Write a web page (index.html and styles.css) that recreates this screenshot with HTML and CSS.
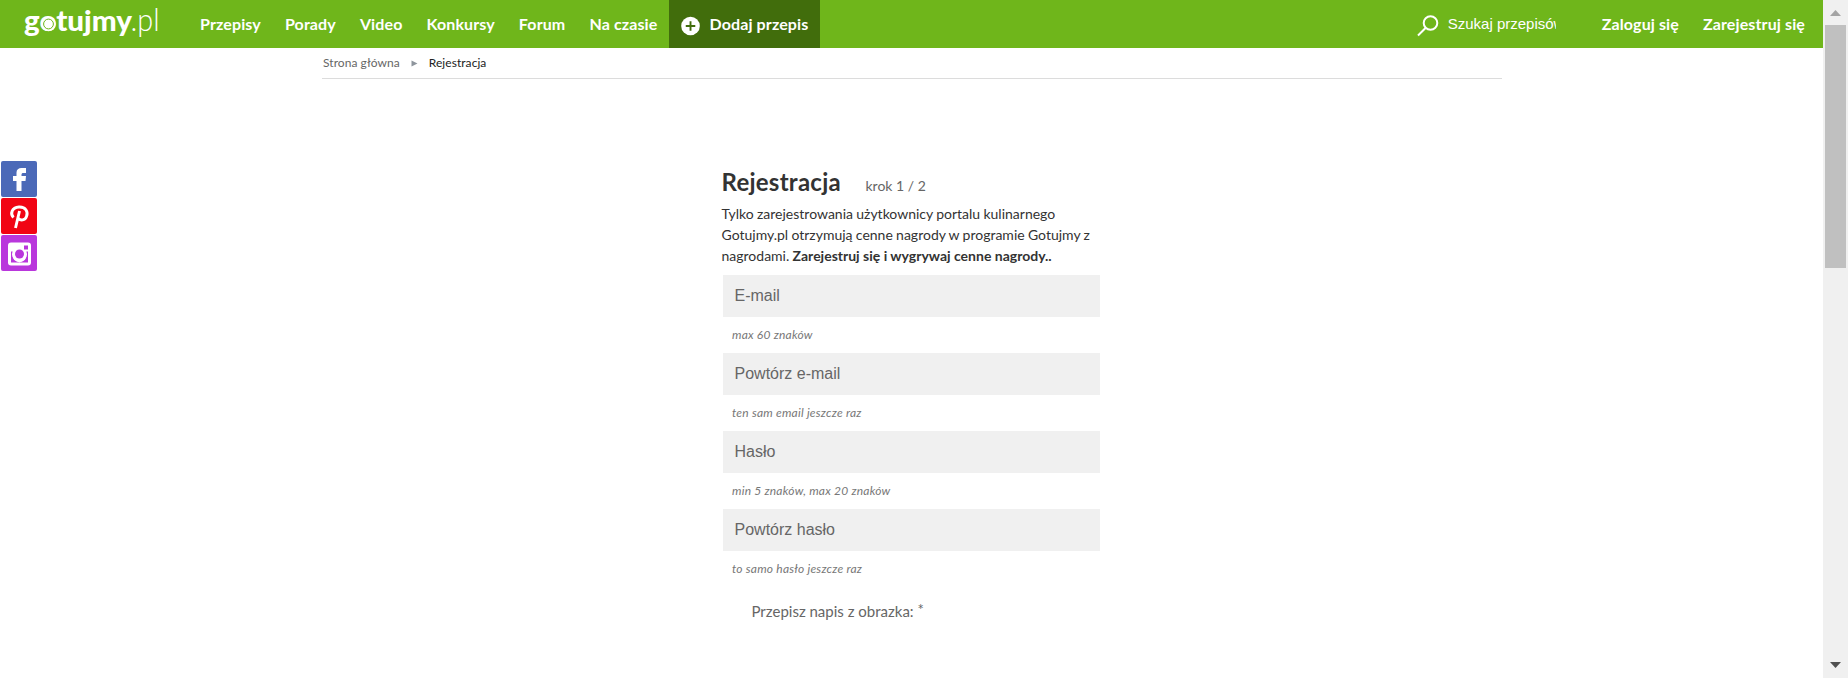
FILE: index.html
```html
<!DOCTYPE html>
<html lang="pl">
<head>
<meta charset="utf-8">
<title>Rejestracja - Gotujmy.pl</title>
<link rel="stylesheet" href="styles.css">
</head>
<body>
<div class="page">
  <header class="topbar">
    <a class="logo"><svg width="144" height="48" viewBox="0 0 144 48" role="img" aria-label="gotujmy.pl">
      <text class="logo-bold" x="7" y="31" textLength="108" lengthAdjust="spacingAndGlyphs">gotujmy</text>
      <circle class="logo-disc" cx="31.5" cy="24" r="7.3"/>
      <circle class="logo-ring" cx="31.5" cy="24" r="4.9"/>
      <text class="logo-light" x="113.500" y="31" textLength="29" lengthAdjust="spacingAndGlyphs">.pl</text>
    </svg></a>
    <nav class="menu">
      <a>Przepisy</a><a>Porady</a><a>Video</a><a>Konkursy</a><a>Forum</a><a>Na czasie</a>
      <a class="add"><svg width="20" height="20" viewBox="0 0 20 20"><circle cx="10" cy="10" r="9.8" fill="#fff"/><path d="M10 5v10M5 10h10" stroke="#416d0c" stroke-width="2"/></svg><span>Dodaj przepis</span></a>
    </nav>
    <div class="tools">
      <svg class="lens" width="22" height="22" viewBox="0 0 22 22"><circle cx="13.500" cy="8" r="6.800"/><path d="M8.800 12.800L1 20.500" /></svg>
      <span class="query">Szukaj przepisów</span>
      <a class="login">Zaloguj się</a><a class="register">Zarejestruj się</a>
    </div>
  </header>
  <div class="crumbs"><a>Strona główna</a><svg width="7" height="7" viewBox="0 0 7 7"><path d="M.5 .5L6.500 3.500L.5 6.500z" fill="#8e959d"/></svg><span>Rejestracja</span></div>
  <main class="form">
    <div class="heading"><h1>Rejestracja</h1><span>krok 1 / 2</span></div>
    <p class="intro">Tylko zarejestrowania użytkownicy portalu kulinarnego Gotujmy.pl otrzymują cenne nagrody w programie Gotujmy z nagrodami. <b>Zarejestruj się i wygrywaj cenne nagrody..</b></p>
    <div class="field"><div class="input">E-mail</div><em>max 60 znaków</em></div>
    <div class="field"><div class="input">Powtórz e-mail</div><em>ten sam email jeszcze raz</em></div>
    <div class="field"><div class="input">Hasło</div><em>min 5 znaków, max 20 znaków</em></div>
    <div class="field"><div class="input">Powtórz hasło</div><em>to samo hasło jeszcze raz</em></div>
    <div class="captcha">Przepisz napis z obrazka: <span>*</span></div>
  </main>
  <aside class="social">
    <a class="fb"><svg width="36" height="36" viewBox="0 0 36 36"><path d="M15.500 30V20H12v-5h3.500v-3.500C15.500 8.500 17.500 7 20.500 7H25v5h-2.500c-1.500 0-2 .5-2 2v1H25l-.5 5h-4v10z" fill="#fff"/></svg></a>
    <a class="pin"><svg width="36" height="36" viewBox="0 0 36 36"><path d="M12.500 19.500C9 16 10.500 9.500 18 9c7-.3 9.300 5 7.500 9.500-1.500 4-6 4.500-8 2M18.500 13L14.500 30" fill="none" stroke="#fff" stroke-width="2.900"/></svg></a>
    <a class="insta"><svg width="36" height="36" viewBox="0 0 36 36"><rect x="7" y="7.500" width="23" height="23" rx="3" fill="#fff"/><path d="M10 16.500h3v3h-3zM24 16.500h3v11H10v-11h3a6.800 6.800 0 1 0 11 0z" fill="#b937dc"/><circle cx="18.500" cy="19" r="7.500" fill="#fff"/><circle cx="18.500" cy="19" r="4.500" fill="#b937dc"/><rect x="23" y="10.500" width="4" height="4" fill="#b937dc"/></svg></a>
  </aside>
</div>
<div class="scrollbar">
  <svg width="25" height="25" viewBox="0 0 25 25"><path d="M7 16L12.500 10L18 16z" fill="#a3a3a3"/></svg>
  <div class="thumb"></div>
  <svg width="25" height="25" viewBox="0 0 25 25"><path d="M7 9h11L12.500 15z" fill="#505050"/></svg>
</div>
</body>
</html>
```
FILE: styles.css
```css
* { box-sizing: border-box; }
body { margin: 0; height: 678px; overflow: hidden; display: flex; background: #fff; color: #333; font-family: Lato, sans-serif; }
svg { display: block; }
.page { position: relative; width: 1823px; height: 678px; }
.topbar { display: flex; height: 48px; background: #6fb61b; color: #fff; font-size: 16px; font-weight: 700; letter-spacing: 0.12px; }
.logo { width: 171px; margin-left: 17px; letter-spacing: 0; }
.logo-bold { font-family: Lato; font-weight: 900; font-size: 29px; fill: #fff; }
.logo-light { font-family: Lato; font-weight: 300; font-size: 31px; fill: #fff; }
.logo-disc { fill: #fff; }
.logo-ring { fill: #fff; stroke: #6fb61b; stroke-width: 1; }
.menu { display: flex; line-height: 48px; white-space: nowrap; }
.menu a { padding: 0 12px; height: 48px; }
.menu .add { display: flex; align-items: center; gap: 9px; width: 151px; background: #416d0c; line-height: 48px; }
.menu .add svg { margin-top: 3px; }
.tools { display: flex; margin-left: auto; line-height: 48px; white-space: nowrap; }
.lens { margin: 15px 9px 0 0; fill: none; stroke: #fff; stroke-width: 2; }
.query { width: 108px; height: 48px; overflow: hidden; font: 15px/48px "Liberation Sans", sans-serif; letter-spacing: 0; }
.login { margin-left: 46px; }
.register { margin: 0 18px 0 24px; }
.crumbs { display: flex; align-items: center; width: 1180px; height: 31px; margin-left: 322px; padding: 0 0 1px 1px; border-bottom: 1px solid #dcdcdc; font-size: 12px; color: #222; letter-spacing: 0.06px; }
.crumbs a { color: #666; }
.crumbs svg { margin: 2px 11px 0 11px; }
.form { width: 378px; margin: 83px 0 0 721.5px; }
.heading { display: flex; align-items: baseline; height: 41px; }
.heading h1 { margin: 0; width: 144px; font-size: 24px; line-height: 40px; font-weight: 700; letter-spacing: 0.25px; }
.heading span { font-size: 14px; color: #666; }
.intro { margin: 0; height: 72px; font-size: 14px; line-height: 21px; word-spacing: -0.3px; }
.intro b { word-spacing: 0; }
.field { height: 78px; margin-left: 1.5px; }
.input { height: 42px; padding-left: 11.5px; background: #f0f0f0; color: #666; font: 16px/41px "Liberation Sans", sans-serif; }
.field em { display: block; padding-left: 9px; font-size: 12px; line-height: 36px; color: #777; letter-spacing: 0.22px; }
.captcha { padding: 12px 0 0 30px; font-size: 15px; line-height: 24px; color: #666; }
.captcha span { position: relative; top: -2px; }
.social { position: absolute; left: 1px; top: 161px; display: grid; gap: 1px; }
.social a { width: 36px; height: 36px; border-radius: 2px; }
.fb { background: #4b69b8; }
.pin { background: #f10414; }
.insta { background: #b937dc; }
.scrollbar { display: flex; flex-direction: column; width: 25px; height: 678px; background: #f0f0f0; }
.thumb { width: 21px; height: 243px; margin: 0 2px auto; background: #c0c0c0; }
```
